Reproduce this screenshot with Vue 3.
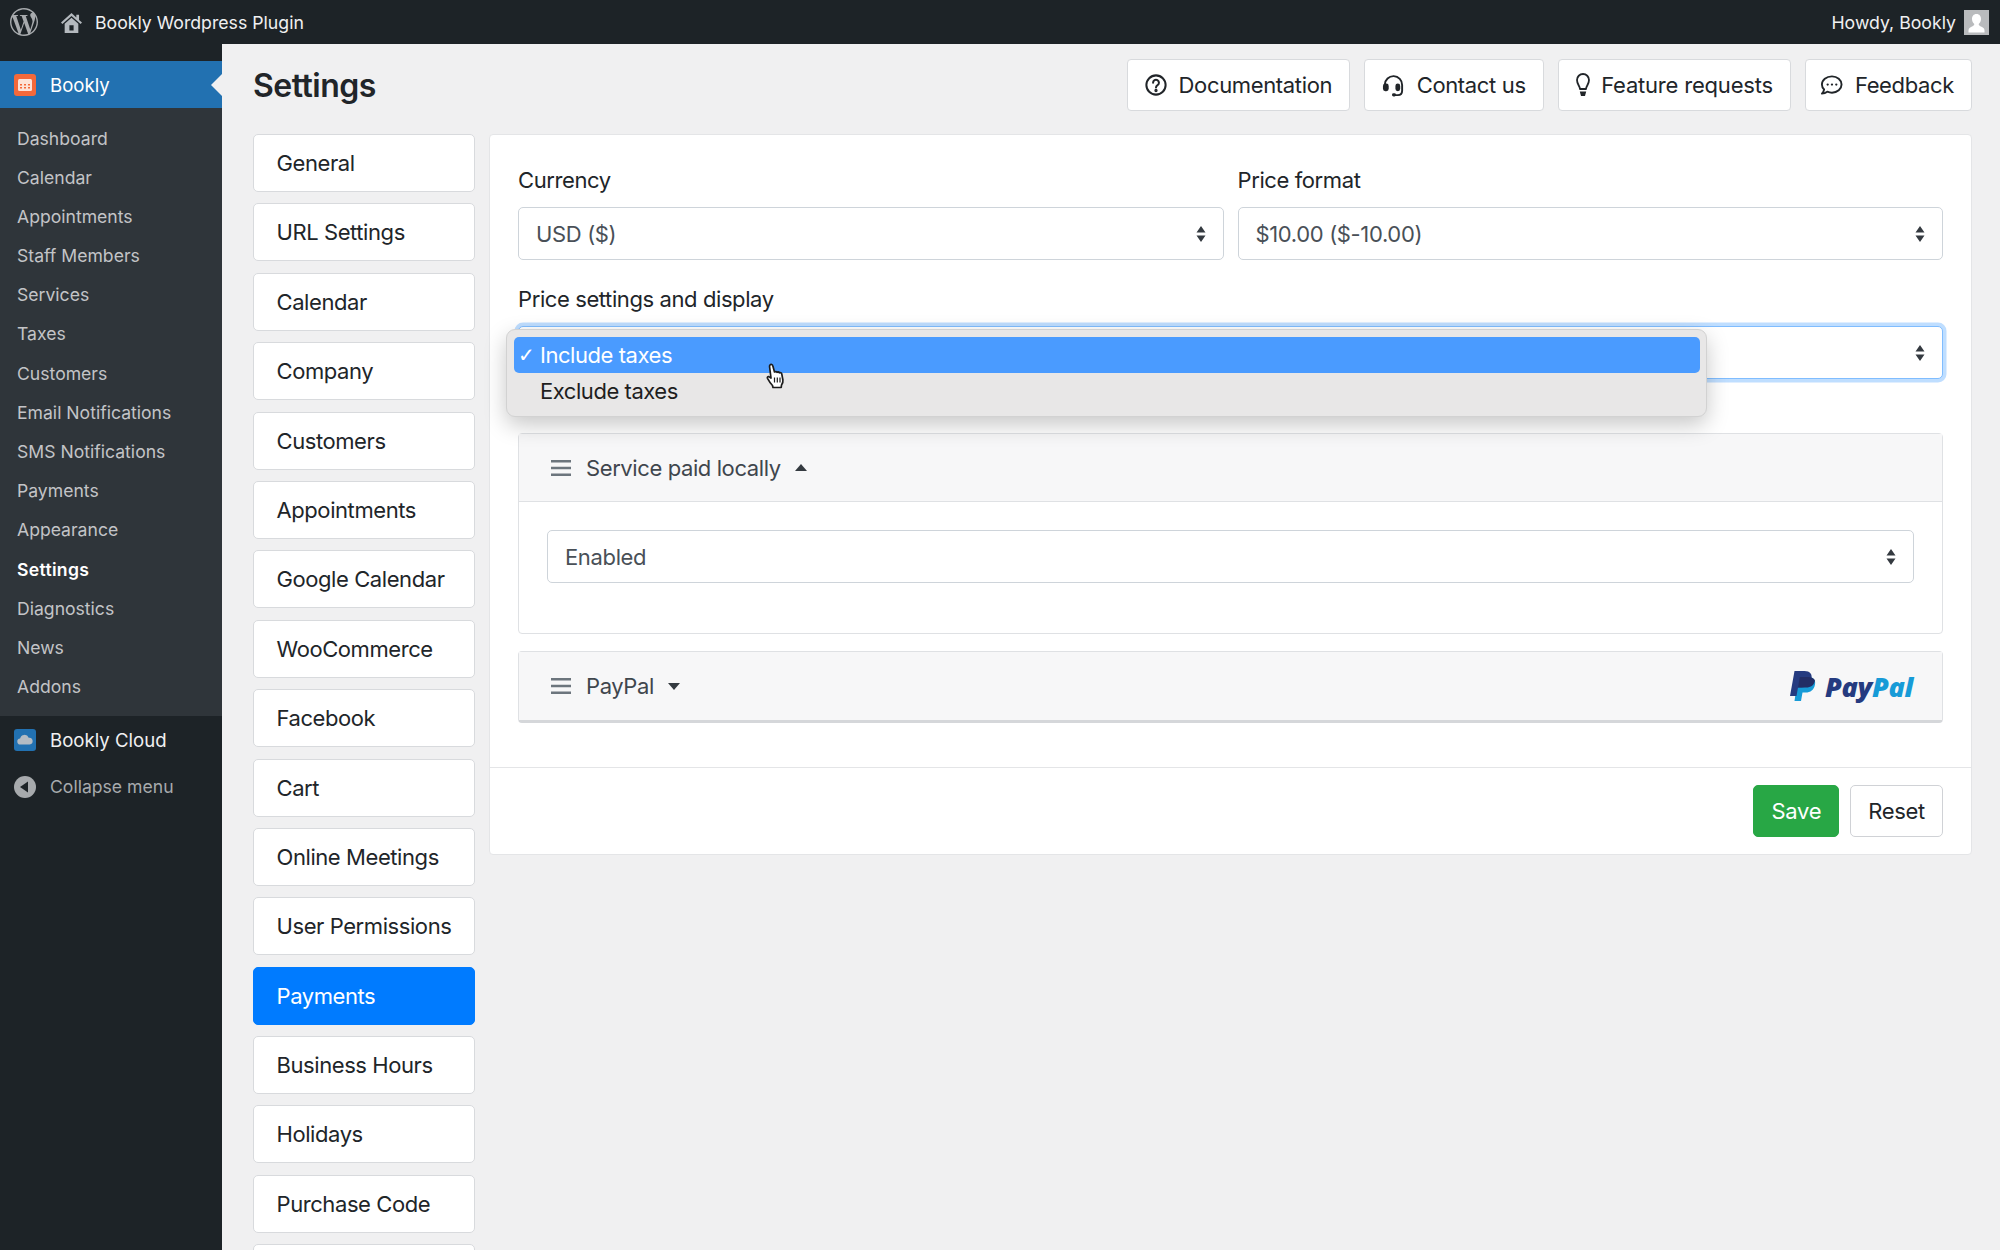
<template>
  <div class="admin">
    <header class="topbar">
      <svg class="wp-logo" viewBox="0 0 24 24"><path d="M21.469 6.825c.84 1.537 1.318 3.3 1.318 5.175 0 3.979-2.156 7.456-5.363 9.325l3.295-9.527c.615-1.54.82-2.771.82-3.864 0-.405-.026-.78-.07-1.11m-7.981.105c.647-.03 1.232-.105 1.232-.105.582-.075.514-.93-.067-.899 0 0-1.755.135-2.88.135-1.064 0-2.85-.15-2.85-.15-.585-.03-.661.855-.075.885 0 0 .54.061 1.125.09l1.68 4.605-2.37 7.08L5.354 6.9c.649-.03 1.234-.1 1.234-.1.585-.075.516-.93-.065-.896 0 0-1.746.138-2.874.138-.2 0-.438-.008-.69-.015C4.911 3.15 8.235 1.215 12 1.215c2.809 0 5.365 1.072 7.286 2.833-.046-.003-.091-.009-.141-.009-1.06 0-1.812.923-1.812 1.914 0 .89.513 1.643 1.06 2.531.411.72.89 1.643.89 2.977 0 .915-.354 1.994-.821 3.479l-1.075 3.585-3.9-11.61.001.014zM12 22.784c-1.059 0-2.081-.153-3.048-.437l3.237-9.406 3.315 9.087c.024.053.05.101.078.149-1.12.393-2.325.609-3.582.609M1.211 12c0-1.564.336-3.05.935-4.39L7.29 21.709C3.694 19.96 1.212 16.271 1.211 12M12 0C5.385 0 0 5.385 0 12s5.385 12 12 12 12-5.385 12-12S18.615 0 12 0"/></svg>
      <svg class="home" viewBox="0 0 20 20">
        <path d="M10 1 0 10l1.300 1.400L10 3.700l8.700 7.700L20 10l-2.800-2.500V2.500h-2.600v2.700z"/>
        <path fill-rule="evenodd" d="M10 5.400 3.500 11.200V20h13v-8.800zM8 12.500h4v5H8z"/>
      </svg>
      <span class="site">Bookly Wordpress Plugin</span>
      <span class="howdy">Howdy, Bookly</span>
      <svg class="avatar" viewBox="0 0 25 25"><rect width="25" height="25" fill="#b9bbbd"/><path d="M12.500 4c-3 0-4.500 2.300-4.500 5 0 2.200 1 4 2.300 5 0 1-.6 1.800-2.300 2.500-2 .8-3.500 1.800-3.500 4v2h16v-2c0-2.200-1.500-3.200-3.500-4-1.700-.7-2.300-1.500-2.300-2.500 1.300-1 2.300-2.800 2.300-5 0-2.700-1.500-5-4.500-5z" fill="#fff"/></svg>
    </header>

    <div class="body">
      <aside class="sidebar">
        <div class="menu-current">
          <svg class="menu-icon" viewBox="0 0 22 22">
            <rect width="22" height="22" rx="3" fill="#f4693a"/>
            <rect x="4" y="5" width="14" height="12" rx="1.500" fill="#fde3d8"/>
            <path d="M6 10h2v1.500H6zM10 10h2v1.500h-2zM14 10h2v1.500h-2zM6 13h2v1.500H6zM10 13h2v1.500h-2zM14 13h2v1.500h-2z" fill="#f4693a"/>
          </svg>
          <span>Bookly</span>
        </div>
        <nav class="submenu">
          <a v-for="item in menu" :key="item" class="sub-item" :class="{ active: item === 'Settings' }">{{ item }}</a>
        </nav>
        <div class="menu-row cloud">
          <svg class="menu-icon" viewBox="0 0 22 22">
            <rect width="22" height="22" rx="3" fill="#2271b1"/>
            <path d="M6.500 15.500a3 3 0 0 1-.4-6 4.500 4.500 0 0 1 8.600-.8 3.400 3.400 0 0 1 1 6.800z" fill="#b4bcc4"/>
          </svg>
          <span>Bookly Cloud</span>
        </div>
        <div class="menu-row collapse">
          <svg class="menu-icon" viewBox="0 0 22 22">
            <circle cx="11" cy="11" r="11" fill="#a7aaad"/>
            <path d="M14 5.500v11L6 11z" fill="#1d2327"/>
          </svg>
          <span>Collapse menu</span>
        </div>
      </aside>

      <main class="main">
        <div class="page-head">
          <h1>Settings</h1>
          <div class="head-btns">
            <a class="btn">
              <svg class="ico" viewBox="0 0 24 24" fill="none" stroke="#212529" stroke-width="2.200"><circle cx="12" cy="12" r="10.500"/><path d="M8.800 9.500a3.200 3.200 0 1 1 4.900 2.700c-1.100.7-1.700 1.200-1.700 2.500" stroke-linecap="round"/><circle cx="12" cy="18" r=".7" fill="#212529"/></svg>
              Documentation
            </a>
            <a class="btn">
              <svg class="ico wide" viewBox="0 0 24 24" fill="none" stroke="#212529" stroke-width="2"><path d="M3 11a9 9 0 0 1 18 0.500v6c0 3-2 4.500-4.500 4.500H12" stroke-linecap="round"/><rect x="1" y="10" width="6" height="8" rx="2.500" fill="#212529" stroke="none"/><rect x="14" y="10" width="5" height="8" rx="2.500" fill="#212529" stroke="none"/><rect x="10.500" y="20" width="4" height="3.500" rx="1.500" fill="#212529" stroke="none"/></svg>
              Contact us
            </a>
            <a class="btn feature">
              <svg class="ico bulb" viewBox="0 0 14 24" fill="none" stroke="#212529" stroke-width="1.800"><path d="M4 16c0-3-3-4.500-3-9a6 6 0 0 1 12 0c0 4.500-3 6-3 9z" stroke-linejoin="round"/><path d="M3.800 18.500h6.400L9 23H5z" fill="#212529" stroke="none"/></svg>
              Feature requests
            </a>
            <a class="btn feedback">
              <svg class="ico wide" viewBox="0 0 24 24" fill="none" stroke="#212529" stroke-width="2"><path d="M12.500 2.500C6.500 2.500 2 6.300 2 11c0 2 .9 3.800 2.300 5.100-.2 1.700-1 3.200-2.300 4.400 2.300 0 4.200-.9 5.600-2 1.500.6 3.100 1 4.900 1 5.500 0 10-3.800 10-8.500s-4.500-8.500-10-8.500z" stroke-linejoin="round"/><circle cx="8" cy="11" r="1.200" fill="#212529" stroke="none"/><circle cx="12.500" cy="11" r="1.200" fill="#212529" stroke="none"/><circle cx="17" cy="11" r="1.200" fill="#212529" stroke="none"/></svg>
              Feedback
            </a>
          </div>
        </div>

        <div class="columns">
          <nav class="tabs">
            <a v-for="(tab, i) in tabs" :key="i" class="tab" :class="{ active: tab === 'Payments' }">{{ tab }}</a>
          </nav>

          <section class="card">
            <div class="card-body">
              <div class="two-cols">
                <div>
                  <label>Currency</label>
                  <div class="select">USD ($)<svg class="caret" viewBox="0 0 10 16"><path d="M5 0 9.500 6.500H.5zM5 16 .5 9.500h9z"/></svg></div>
                </div>
                <div>
                  <label>Price format</label>
                  <div class="select">$10.00 ($-10.00)<svg class="caret" viewBox="0 0 10 16"><path d="M5 0 9.500 6.500H.5zM5 16 .5 9.500h9z"/></svg></div>
                </div>
              </div>

              <div class="taxes">
                <label>Price settings and display</label>
                <div class="select-wrap">
                  <div class="select focused"><svg class="caret" viewBox="0 0 10 16"><path d="M5 0 9.500 6.500H.5zM5 16 .5 9.500h9z"/></svg></div>
                  <div class="dropdown">
                    <div class="opt selected"><span class="check">✓</span>Include taxes</div>
                    <div class="opt">Exclude taxes</div>
                  </div>
                  <svg class="hand" viewBox="0 0 20 26">
                    <path d="M5 2c1-1 2.500-.5 2.800.8L9.500 9c.8-.6 2-.5 2.500.3.800-.5 1.900-.3 2.400.5.800-.4 2-.1 2.300.9l1.200 6.300c.3 2-.3 3.500-1.400 5l-.3 2.500H8l-.5-2c-1.500-1.500-3.500-4.500-5-7.200-.5-1 .3-2 1.300-1.700l2.200 1.400L4.600 4c-.2-.8 0-1.500.4-2z" fill="#fff" stroke="#1c1c1c" stroke-width="1.700" stroke-linejoin="round"/>
                    <path d="M9.500 14.500v5M12.300 14.500v5M15 14.500v5" stroke="#1c1c1c" stroke-width="1.200"/>
                  </svg>
                </div>
              </div>

              <div class="gateway">
                <div class="gateway-head open">
                  <svg class="bars" viewBox="0 0 20 18"><path d="M0 1h20v2.500H0zM0 7.700h20v2.500H0zM0 14.500h20V17H0z"/></svg>
                  <span>Service paid locally</span>
                  <svg class="arrow" viewBox="0 0 12 7"><path d="M6 0 12 7H0z"/></svg>
                </div>
                <div class="gateway-body">
                  <div class="select">Enabled<svg class="caret" viewBox="0 0 10 16"><path d="M5 0 9.500 6.500H.5zM5 16 .5 9.500h9z"/></svg></div>
                </div>
              </div>

              <div class="gateway closed">
                <div class="gateway-head">
                  <svg class="bars" viewBox="0 0 20 18"><path d="M0 1h20v2.500H0zM0 7.700h20v2.500H0zM0 14.500h20V17H0z"/></svg>
                  <span>PayPal</span>
                  <svg class="arrow" viewBox="0 0 12 7"><path d="M0 0h12L6 7z"/></svg>
                  <div class="paypal">
                    <svg class="pp-mark" viewBox="0 0 26 30">
                      <path d="M8 6h10c5 0 8 2.500 7 7.500-1 5.500-4.500 8-9.500 8h-3L11 30H4.500z" fill="#179bd7"/>
                      <path d="M4.500 0h10c5.500 0 8 3 7 8-1 5.500-5 8.500-10 8.500H8L6.500 25H0z" fill="#253b80"/>
                      <path d="M8 16.500 9.800 6H18c3.500 0 6 1.500 7 3.500-.8 4.500-4 7-9 7z" fill="#222d65"/>
                    </svg>
                    <span class="pp-text"><b class="pay">Pay</b><b class="pal">Pal</b></span>
                  </div>
                </div>
              </div>
            </div>
            <div class="card-foot">
              <a class="foot-btn save">Save</a>
              <a class="foot-btn">Reset</a>
            </div>
          </section>
        </div>
      </main>
    </div>
  </div>
</template>

<script setup>
const menu = [
  "Dashboard",
  "Calendar",
  "Appointments",
  "Staff Members",
  "Services",
  "Taxes",
  "Customers",
  "Email Notifications",
  "SMS Notifications",
  "Payments",
  "Appearance",
  "Settings",
  "Diagnostics",
  "News",
  "Addons",
];

// the last one is cut off by the bottom of the window
const tabs = [
  "General",
  "URL Settings",
  "Calendar",
  "Company",
  "Customers",
  "Appointments",
  "Google Calendar",
  "WooCommerce",
  "Facebook",
  "Cart",
  "Online Meetings",
  "User Permissions",
  "Payments",
  "Business Hours",
  "Holidays",
  "Purchase Code",
  "",
];
</script>

<style>
html,
body {
  background: #f0f0f1;
}
</style>

<style scoped>
.admin {
  width: 2000px;
  height: 1250px;
  overflow: hidden;
  display: flex;
  flex-direction: column;
  font-family: Inter, "Liberation Sans", sans-serif;
  color: #212529;
  background: #f0f0f1;
}

/* admin bar */
.topbar {
  height: 44px;
  flex: none;
  display: flex;
  align-items: center;
  background: #1d2327;
  color: #f0f0f1;
  font-size: 17.7px;
  padding: 0 11px 0 10px;
}
.wp-logo {
  width: 28px;
  height: 28px;
  fill: #a7aaad;
}
.home {
  width: 21px;
  height: 21px;
  margin-left: 23px;
  fill: #b4b9be;
}
.site {
  margin-left: 13px;
}
.howdy {
  margin-left: auto;
  margin-right: 8px;
}
.avatar {
  width: 25px;
  height: 25px;
}

.body {
  flex: 1;
  display: flex;
  min-height: 0;
}

/* sidebar */
.sidebar {
  width: 222px;
  flex: none;
  background: #1d2327;
  padding-top: 17px;
  font-size: 17.6px;
}
.menu-current {
  position: relative;
  height: 47px;
  display: flex;
  align-items: center;
  padding-left: 14px;
  background: #2271b1;
  color: #fff;
  font-size: 18.6px;
}
.menu-current::after {
  content: "";
  position: absolute;
  right: 0;
  top: 13px;
  border: 11px solid transparent;
  border-left-width: 0;
  border-right-color: #f0f0f1;
}
.menu-icon {
  width: 22px;
  height: 22px;
  margin-right: 14px;
  flex: none;
}
.submenu {
  background: #2f353a;
  padding: 10.500px 0 9.500px;
  display: flex;
  flex-direction: column;
}
.sub-item {
  height: 39.2px;
  line-height: 39.2px;
  padding-left: 17px;
  color: #c3c4c7;
}
.sub-item.active {
  color: #fff;
  font-weight: 600;
  letter-spacing: 0.3px;
}
.menu-row {
  display: flex;
  align-items: center;
  padding-left: 14px;
}
.cloud {
  height: 47px;
  margin-top: 1px;
  color: #f0f0f1;
  font-size: 18.6px;
}
.collapse {
  height: 46px;
  color: #a7aaad;
}

/* page */
.main {
  flex: 1;
  min-width: 0;
  padding: 15px 28px 0 31px;
}
.page-head {
  display: flex;
  align-items: center;
  justify-content: space-between;
  margin-bottom: 23px;
}
h1 {
  margin: 0;
  font-size: 32px;
  font-weight: 600;
  letter-spacing: -0.5px;
  line-height: 51px;
}
.head-btns {
  display: flex;
  gap: 14px;
}
.btn {
  height: 52px;
  box-sizing: border-box;
  display: flex;
  align-items: center;
  gap: 11.500px;
  padding: 0 17px;
  background: #fff;
  border: 1.500px solid #d8dadd;
  border-radius: 4px;
  font-size: 22px;
  letter-spacing: -0.35px;
}
.btn.feature {
  letter-spacing: -0.2px;
}
.btn.feedback {
  padding-left: 14.500px;
}
.ico {
  width: 22px;
  height: 22px;
  flex: none;
}
.ico.wide {
  width: 23px;
  height: 23px;
}
.ico.bulb {
  width: 14px;
  height: 24px;
}

.columns {
  display: flex;
  gap: 14px;
  align-items: flex-start;
}
.tabs {
  width: 222px;
  flex: none;
  display: flex;
  flex-direction: column;
  gap: 11.400px;
}
.tab {
  height: 58px;
  flex: none;
  box-sizing: border-box;
  display: flex;
  align-items: center;
  padding-left: 22.500px;
  background: #fff;
  border: 1.500px solid #d8dadd;
  border-radius: 5px;
  font-size: 22px;
  letter-spacing: -0.42px;
}
.tab.active {
  background: #007bff;
  border-color: #007bff;
  color: #fff;
}

.card {
  flex: 1;
  min-width: 0;
  background: #fff;
  border: 1.500px solid #e4e5e7;
  border-radius: 4px;
}
.card-body {
  padding: 31px 28px 44px;
}
label {
  display: block;
  height: 28px;
  line-height: 28px;
  margin-bottom: 13px;
  font-size: 22px;
  letter-spacing: -0.4px;
}
.two-cols {
  display: grid;
  grid-template-columns: 1fr 1fr;
  gap: 14px;
}
.select {
  position: relative;
  height: 53px;
  box-sizing: border-box;
  display: flex;
  align-items: center;
  padding-left: 17px;
  border: 1.500px solid #ced4da;
  border-radius: 5px;
  background: #fff;
  color: #495057;
  font-size: 22px;
  letter-spacing: -0.35px;
}
.caret {
  position: absolute;
  right: 17px;
  top: 18px;
  width: 10px;
  height: 16px;
  fill: #343a40;
}
.taxes {
  margin-top: 25px;
  margin-bottom: 54px;
}
.select-wrap {
  position: relative;
}
.select.focused {
  border-color: #80bdff;
  box-shadow: 0 0 0 3.500px rgba(0, 123, 255, 0.25);
}
.dropdown {
  position: absolute;
  left: -12px;
  top: 3px;
  width: 1201px;
  height: 88px;
  box-sizing: border-box;
  padding: 7px 6px 7px 7px;
  background: #e8e7e7;
  border: 1px solid #d2d2d2;
  border-radius: 9px;
  box-shadow: 0 8px 22px rgba(0, 0, 0, 0.22);
  color: #1e1e1e;
  font-size: 22px;
  letter-spacing: -0.45px;
}
.opt {
  position: relative;
  height: 36px;
  line-height: 36px;
  padding-left: 26px;
  border-radius: 5px;
}
.opt.selected {
  background: #4a9bff;
  color: #fff;
}
.check {
  position: absolute;
  left: 4px;
  font-family: "DejaVu Sans", sans-serif;
  font-size: 20px;
}
.hand {
  position: absolute;
  left: 247px;
  top: 37px;
  width: 20px;
  height: 26px;
}

.gateway {
  border: 1.500px solid #dfe1e4;
  border-radius: 4px;
}
.gateway.closed {
  margin-top: 17px;
  border-bottom-width: 3px;
  border-bottom-color: #d5d7da;
}
.gateway.closed .gateway-head {
  height: 68px;
}
.gateway-head {
  height: 67px;
  display: flex;
  align-items: center;
  padding-left: 32px;
  background: #f7f7f8;
  color: #3f464d;
  font-size: 22px;
  letter-spacing: -0.4px;
}
.gateway-head.open {
  border-bottom: 1.500px solid #dfe1e4;
}
.bars {
  width: 20px;
  height: 18px;
  margin-right: 15px;
  fill: #6c757d;
}
.arrow {
  width: 12px;
  height: 7px;
  margin-left: 14px;
  fill: #343a40;
}
.gateway-body {
  padding: 28px 28px 50px;
}
.paypal {
  margin-left: auto;
  margin-right: 29px;
  display: flex;
  align-items: center;
  gap: 9px;
}
.pp-mark {
  width: 26px;
  height: 30px;
}
.pp-text {
  font-family: "Open Sans", sans-serif;
  font-style: italic;
  font-size: 27px;
  letter-spacing: -0.3px;
}
.pp-text b {
  font-weight: 800;
}
.pay {
  color: #253b80;
}
.pal {
  color: #179bd7;
}

.card-foot {
  border-top: 1.500px solid #e4e5e7;
  display: flex;
  justify-content: flex-end;
  gap: 11px;
  padding: 17px 28px;
}
.foot-btn {
  height: 52px;
  box-sizing: border-box;
  display: flex;
  align-items: center;
  padding: 0 17px;
  background: #fff;
  border: 1.500px solid #d0d2d6;
  border-radius: 5px;
  font-size: 22px;
  letter-spacing: -0.3px;
}
.foot-btn.save {
  background: #28a745;
  border-color: #28a745;
  color: #fff;
}
</style>
